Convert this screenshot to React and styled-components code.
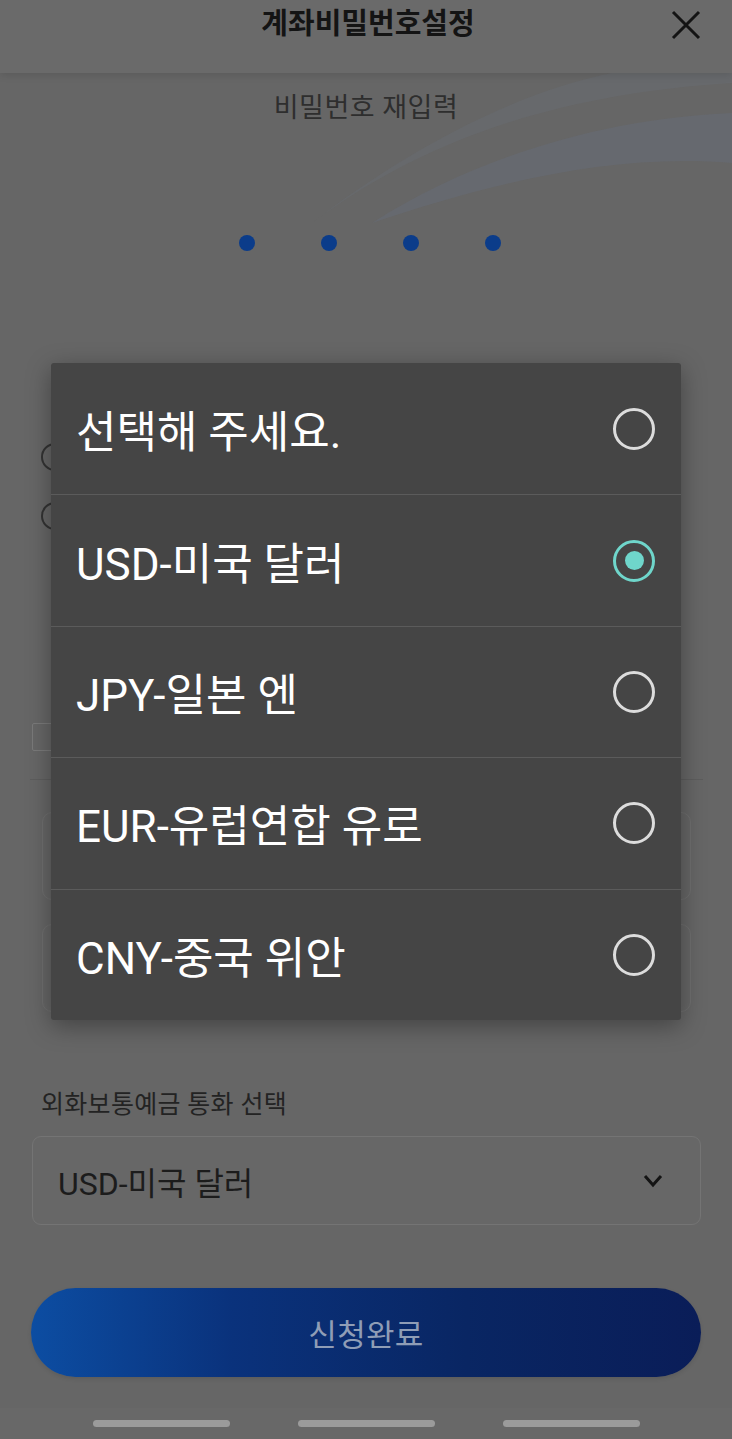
import React, { useState } from "react";
import styled, { createGlobalStyle } from "styled-components";

const GlobalStyle = createGlobalStyle`
  html, body {
    margin: 0;
    padding: 0;
    background: #666666;
  }
  * {
    box-sizing: border-box;
  }
`;

const KR = `Roboto, "Noto Sans CJK KR", "Noto Sans", sans-serif`;

const Screen = styled.div`
  position: relative;
  width: 732px;
  height: 1439px;
  overflow: hidden;
  background: #666666;
  font-family: ${KR};
  display: flex;
  flex-direction: column;
`;

const Header = styled.header`
  position: relative;
  z-index: 1;
  height: 73px;
  flex-shrink: 0;
  display: flex;
  justify-content: center;
  align-items: flex-start;
  padding-top: 5px;
  background: #6a6a6a;
  box-shadow: 0 2px 8px rgba(0, 0, 0, 0.12);
`;

const Title = styled.h1`
  margin: 0;
  font-size: 29px;
  line-height: 38px;
  font-weight: 700;
  color: #141414;
  padding-left: 4px;
`;

const CloseButton = styled.button`
  position: absolute;
  right: 30px;
  top: 9px;
  width: 32px;
  height: 32px;
  padding: 0;
  border: none;
  background: none;
  display: flex;
  align-items: center;
  justify-content: center;
`;

const Body = styled.main`
  position: relative;
  flex: 1;
  display: flex;
  flex-direction: column;
`;

const Wave = styled.svg`
  position: absolute;
  top: 0;
  right: 0;
  width: 420px;
  height: 150px;
  pointer-events: none;
`;

const Prompt = styled.p`
  position: relative;
  margin: 17px 0 0;
  text-align: center;
  font-size: 27px;
  line-height: 36px;
  color: #2e2e2e;
  letter-spacing: 0.5px;
`;

const Dots = styled.div`
  position: relative;
  display: flex;
  justify-content: center;
  gap: 66px;
  margin-top: 109px;
  padding-left: 7px;
`;

const Dot = styled.span`
  width: 16px;
  height: 16px;
  border-radius: 50%;
  background: #0b3c8a;
`;

const Section = styled.section`
  display: flex;
  flex-direction: column;
  padding: 0 31px;
`;

const RadioList = styled.div`
  display: flex;
  flex-direction: column;
  gap: 26px;
  margin-top: 189px;
  padding-left: 10px;
`;

const RadioOption = styled.div`
  display: flex;
  align-items: center;
  height: 33px;
`;

const RadioRing = styled.span`
  width: 28px;
  height: 28px;
  border-radius: 50%;
  border: 2px solid #333;
`;

const CheckRow = styled.div`
  display: flex;
  align-items: center;
  margin-top: 191px;
  padding-left: 1px;
`;

const CheckBox = styled.span`
  width: 28px;
  height: 28px;
  border: 1.5px solid #7a7a7a;
  border-radius: 2px;
`;

const Divider = styled.hr`
  margin: 28px -2px 0 -1px;
  border: none;
  border-top: 1.5px solid #5d5d5d;
`;

const InputBox = styled.div`
  height: 88px;
  margin: ${(p) => p.$mt}px 10px 0 11px;
  border: 1.5px solid #6f6f6f;
  border-radius: 10px;
`;

const FieldLabel = styled.label`
  margin-top: 76px;
  padding-left: 10px;
  font-size: 25px;
  line-height: 34px;
  color: #232323;
  letter-spacing: 0.3px;
`;

const SelectBox = styled.div`
  margin-top: 14px;
  height: 89px;
  margin-left: 1px;
  display: flex;
  align-items: center;
  justify-content: space-between;
  padding: 0 36px 0 25px;
  border: 1.5px solid #747474;
  border-radius: 9px;
  background: #676767;
  font-size: 32px;
  color: #1c1c1c;
`;

const SubmitButton = styled.button`
  margin-top: 63px;
  height: 89px;
  border: none;
  border-radius: 45px;
  background: linear-gradient(90deg, #0c4da2 0%, #0a327c 30%, #092663 65%, #0a1d58 100%);
  color: #8f9db6;
  font-family: ${KR};
  font-size: 31px;
  letter-spacing: 0.3px;
  box-shadow: 0 2px 4px rgba(0, 0, 0, 0.1);
`;

const NavBar = styled.nav`
  margin-top: auto;
  height: 31px;
  display: flex;
  justify-content: center;
  align-items: flex-start;
  gap: 68px;
  padding-top: 12px;
  padding-left: 1px;
  background: #686868;
`;

const NavHandle = styled.span`
  width: 137px;
  height: 7px;
  border-radius: 4px;
  background: #9b9b9b;
`;

/* overlay dialog */

const Dialog = styled.div`
  position: absolute;
  left: 51px;
  top: 363px;
  width: 630px;
  display: flex;
  flex-direction: column;
  background: #454545;
  border-radius: 3px;
  box-shadow: 0 6px 24px rgba(0, 0, 0, 0.35);
  overflow: hidden;
`;

const OptionRow = styled.div`
  height: 131.4px;
  display: flex;
  align-items: center;
  justify-content: space-between;
  padding: 0 26px 0 25px;
  & + & {
    border-top: 1.6px solid #5b5b5b;
  }
`;

const OptionText = styled.span`
  font-size: 44px;
  color: #ffffff;
`;

const Radio = styled.span`
  position: relative;
  width: 42px;
  height: 42px;
  border-radius: 50%;
  border: 3.5px solid ${(p) => (p.$checked ? "#6fd6cb" : "#dcdcdc")};
  display: flex;
  align-items: center;
  justify-content: center;
  &::after {
    content: "";
    display: ${(p) => (p.$checked ? "block" : "none")};
    width: 19px;
    height: 19px;
    border-radius: 50%;
    background: #6fd6cb;
  }
`;

const options = [
  "선택해 주세요.",
  "USD-미국 달러",
  "JPY-일본 엔",
  "EUR-유럽연합 유로",
  "CNY-중국 위안",
];

export default function App() {
  const [selected, setSelected] = useState(1);

  return (
    <>
      <GlobalStyle />
      <Screen>
        <Header>
          <Title>계좌비밀번호설정</Title>
          <CloseButton aria-label="닫기">
            <svg width="32" height="32" viewBox="0 0 32 32">
              <path d="M3 3 L29 29 M29 3 L3 29" stroke="#141414" strokeWidth="3" />
            </svg>
          </CloseButton>
        </Header>

        <Body>
          <Wave viewBox="0 0 420 150" preserveAspectRatio="none">
            <path d="M0 150 C120 60 260 20 420 10 L420 0 L300 0 C200 20 90 80 0 150 Z" fill="#6b6f78" opacity="0.35" />
            <path d="M60 150 C170 80 300 45 420 40 L420 90 C300 80 180 110 60 150 Z" fill="#687080" opacity="0.35" />
          </Wave>

          <Prompt>비밀번호 재입력</Prompt>
          <Dots>
            <Dot />
            <Dot />
            <Dot />
            <Dot />
          </Dots>

          <Section>
            <RadioList>
              <RadioOption>
                <RadioRing />
              </RadioOption>
              <RadioOption>
                <RadioRing />
              </RadioOption>
            </RadioList>

            <CheckRow>
              <CheckBox />
            </CheckRow>
            <Divider />

            <InputBox $mt={32} />
            <InputBox $mt={24} />

            <FieldLabel>외화보통예금 통화 선택</FieldLabel>
            <SelectBox>
              <span>{options[selected]}</span>
              <svg width="22" height="16" viewBox="0 0 22 16">
                <path d="M3 3 L11 12 L19 3" stroke="#141414" strokeWidth="3" fill="none" />
              </svg>
            </SelectBox>

            <SubmitButton>신청완료</SubmitButton>
          </Section>

          <NavBar>
            <NavHandle />
            <NavHandle />
            <NavHandle />
          </NavBar>
        </Body>

        <Dialog role="listbox">
          {options.map((label, i) => (
            <OptionRow key={label} onClick={() => setSelected(i)}>
              <OptionText>{label}</OptionText>
              <Radio $checked={i === selected} />
            </OptionRow>
          ))}
        </Dialog>
      </Screen>
    </>
  );
}
